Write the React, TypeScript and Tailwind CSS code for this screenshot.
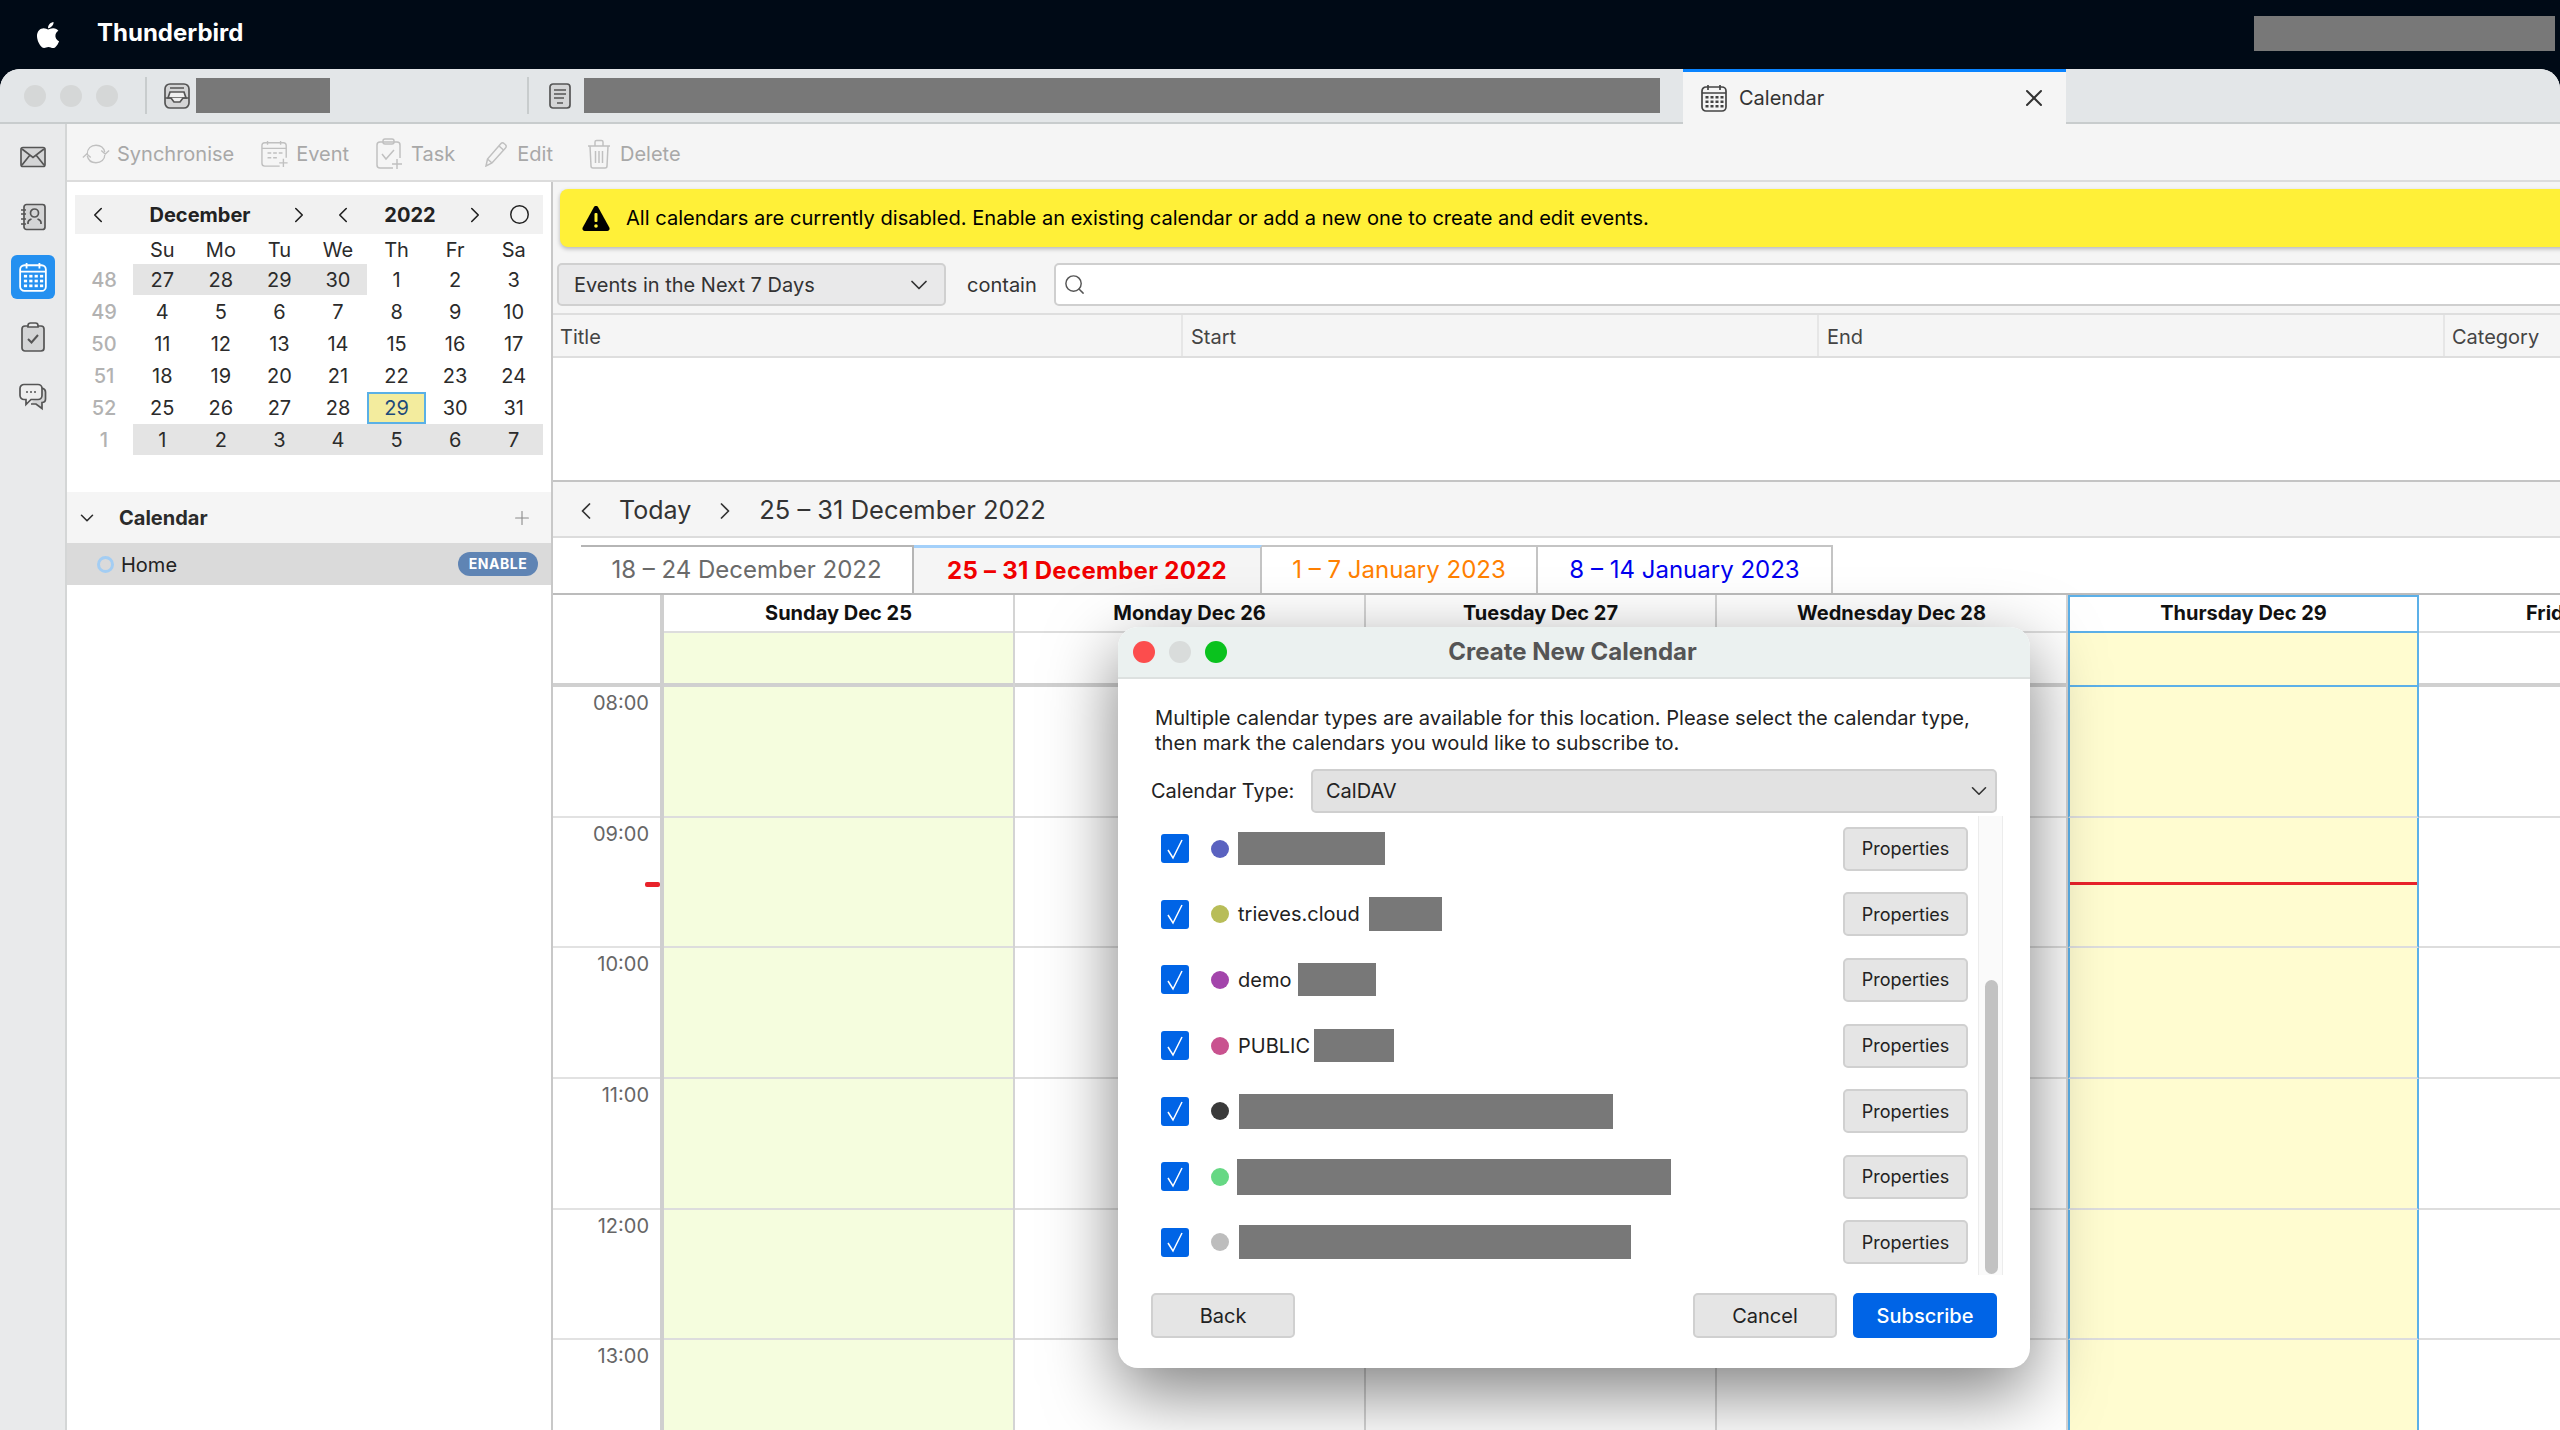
import { FaApple } from 'react-icons/fa';
import { ChevronDown, ChevronLeft, ChevronRight, Circle, Plus, Search, X } from 'lucide-react';

const weeks = [
  { no: 48, days: [27, 28, 29, 30, 1, 2, 3] },
  { no: 49, days: [4, 5, 6, 7, 8, 9, 10] },
  { no: 50, days: [11, 12, 13, 14, 15, 16, 17] },
  { no: 51, days: [18, 19, 20, 21, 22, 23, 24] },
  { no: 52, days: [25, 26, 27, 28, 29, 30, 31] },
  { no: 1, days: [1, 2, 3, 4, 5, 6, 7] },
];

const hours = ['08:00', '09:00', '10:00', '11:00', '12:00', '13:00'];

const calendars = [
  { dot: 'bg-[#5a62c0]', label: '', redact: 'ml-[1px] w-[147px] h-[33px]' },
  { dot: 'bg-[#b8bd58]', label: 'trieves.cloud', redact: 'ml-[9px] w-[73px] h-[34px]' },
  { dot: 'bg-[#a345ab]', label: 'demo', redact: 'ml-[7px] w-[78px] h-[33px]' },
  { dot: 'bg-[#c9528f]', label: 'PUBLIC', redact: 'ml-[4px] w-[80px] h-[33px]' },
  { dot: 'bg-[#3a3a3a]', label: '', redact: 'ml-[2px] w-[374px] h-[35px]' },
  { dot: 'bg-[#66d884]', label: '', redact: 'w-[434px] h-[36px]' },
  { dot: 'bg-[#bdbdbd]', label: '', redact: 'ml-[2px] w-[392px] h-[34px]' },
];

function MailIcon() {
  return (
    <svg width="26" height="22" viewBox="0 0 26 22" fill="none" stroke="#555" strokeWidth="1.7">
      <rect x="1" y="1.500" width="24" height="19" rx="2" fill="#d4d5d6" />
      <path d="M2 3l11 8.500L24 3M2 19l8-10M24 19l-8-10" />
    </svg>
  );
}

function ContactsIcon() {
  return (
    <svg width="26" height="28" viewBox="0 0 26 28" fill="none" stroke="#555" strokeWidth="1.7">
      <rect x="4" y="1.500" width="21" height="25" rx="2.500" fill="#d4d5d6" />
      <path d="M1 7h5M1 11h5M1 16h5M1 21h5" />
      <circle cx="14.500" cy="10" r="4" />
      <path d="M8 21v-1.500c0-2 2-3 3.500-3.500M21 21v-1.500c0-2-2-3-3.500-3.500" />
    </svg>
  );
}

function TasksIcon() {
  return (
    <svg width="24" height="30" viewBox="0 0 24 30" fill="none" stroke="#555" strokeWidth="1.7">
      <rect x="1" y="4" width="22" height="25" rx="3" fill="#d4d5d6" />
      <path d="M7 5V3.500C7 2 8 1 9.500 1h5C16 1 17 2 17 3.500V5z" fill="#e9eaeb" />
      <path d="M7 17l3.500 3.500L17 13" strokeWidth="2" />
    </svg>
  );
}

function ChatIcon() {
  return (
    <svg width="28" height="28" viewBox="0 0 28 28" fill="none" stroke="#555" strokeWidth="1.7">
      <path d="M23 5c2 .5 3.500 2 3.500 4v7c0 2-1.500 3.500-3.500 3.500v6L17 21h-5" fill="#d4d5d6" />
      <path d="M5 1.500h14A4 4 0 0 1 23 5.500v7a4 4 0 0 1-4 4H12l-5 5v-5H5a4 4 0 0 1-4-4v-7a4 4 0 0 1 4-4z" fill="#eeeeee" />
      <path d="M7 9h2M11 9h2M15 9h2" strokeWidth="1.600" />
    </svg>
  );
}

function InboxIcon() {
  return (
    <svg width="26" height="26" viewBox="0 0 26 26" fill="none" stroke="#555" strokeWidth="1.700">
      <rect x="1" y="1" width="24" height="24" rx="5" fill="#d4d5d6" />
      <path d="M6 5h14M6 9h14l2 6H4z" fill="#f0f0f0" />
      <path d="M1 15h6l3 4h6l3-4h6" fill="#f0f0f0" />
    </svg>
  );
}

function NoteIcon() {
  return (
    <svg width="22" height="26" viewBox="0 0 22 26" fill="none" stroke="#555" strokeWidth="1.700">
      <rect x="1" y="1" width="20" height="24" rx="3" fill="#d4d5d6" />
      <path d="M5 7h12M5 11h12M5 15h10M8 20h6" />
    </svg>
  );
}

function CalendarGlyph({ color, size }: { color: string; size: number }) {
  return (
    <svg width={size} height={size} viewBox="0 0 28 28" fill="none" stroke={color} strokeWidth="1.700">
      <rect x="2" y="3" width="24" height="24" rx="4" />
      <path d="M2 9h24M8 1v5M20 1v5" />
      <g fill={color} stroke="none">
        {[7, 12, 17, 22].map((x) =>
          [12, 16.500, 21].map((y) => <rect key={`${x}-${y}`} x={x - 1.500} y={y} width="3" height="2.500" />),
        )}
      </g>
    </svg>
  );
}

function SyncIcon() {
  return (
    <svg width="32" height="26" viewBox="0 0 32 26" fill="none" stroke="currentColor" strokeWidth="1.500">
      <path d="M6 13C6 7 10 3 16 3c5 0 9 3 10 8" />
      <path d="M22 9l4.500 4L31 9" />
      <path d="M26 14c0 5-4 9-10 9-5 0-9-3-10-8" />
      <path d="M1 17l4.500-4 4.500 4" />
    </svg>
  );
}

function EventIcon() {
  return (
    <svg width="30" height="30" viewBox="0 0 30 30" fill="none" stroke="currentColor" strokeWidth="1.500">
      <path d="M20 28H4a3 3 0 0 1-3-3V6a3 3 0 0 1 3-3h20a3 3 0 0 1 3 3v13" />
      <path d="M1 9h26M7 1v4M21 1v4M7 14h4M13 14h4M19 14h4M7 19h4M13 19h4" />
      <path d="M24 20v9M19.500 24.500h9" />
    </svg>
  );
}

function TaskIcon() {
  return (
    <svg width="28" height="32" viewBox="0 0 28 32" fill="none" stroke="currentColor" strokeWidth="1.500">
      <path d="M17 30H4a3 3 0 0 1-3-3V7a3 3 0 0 1 3-3h17a3 3 0 0 1 3 3v13" />
      <rect x="7" y="1" width="11" height="5" rx="2" />
      <path d="M6 16l4 5 8-9" />
      <path d="M21 21v10M16 26h10" />
    </svg>
  );
}

function EditIcon() {
  return (
    <svg width="24" height="26" viewBox="0 0 24 26" fill="none" stroke="currentColor" strokeWidth="1.500">
      <path d="M2 25l1.500-7L17 2.500a2 2 0 0 1 3 0l1.500 1.300a2 2 0 0 1 .2 2.900L8 22z" />
      <path d="M3.500 18L8 22M15 5l4.500 4" />
    </svg>
  );
}

function TrashIcon() {
  return (
    <svg width="24" height="30" viewBox="0 0 24 30" fill="none" stroke="currentColor" strokeWidth="1.500">
      <path d="M1 7h22M8 7V3a1.500 1.500 0 0 1 1.500-1.500h5A1.500 1.500 0 0 1 16 3v4" />
      <path d="M3 7l1 20a2 2 0 0 0 2 2h12a2 2 0 0 0 2-2l1-20" />
      <path d="M8.500 12v12M12 12v12M15.500 12v12" />
    </svg>
  );
}

function WarningIcon() {
  return (
    <svg width="28" height="26" viewBox="0 0 28 26">
      <path d="M14 1c1 0 1.800.5 2.300 1.400l11 20.200c.8 1.500-.2 3.400-2 3.400H2.700c-1.800 0-2.800-1.900-2-3.400l11-20.200C12.200 1.500 13 1 14 1z" fill="#000" />
      <rect x="12.500" y="8" width="3" height="9" rx="1" fill="#fff038" />
      <circle cx="14" cy="21" r="1.800" fill="#fff038" />
    </svg>
  );
}

function Redact({ className }: { className: string }) {
  return <div className={`bg-[#787878] shrink-0 ${className}`} />;
}

function ToolItem({ icon, label, className }: { icon: React.ReactNode; label: string; className?: string }) {
  return (
    <div className={`flex items-center gap-[7px] text-[#a8a8a8] text-[20px] ${className ?? ''}`}>
      <span className="w-[28px] flex justify-center text-[#c0c0c0]">{icon}</span>
      <span>{label}</span>
    </div>
  );
}

function MiniCalendar() {
  return (
    <div className="mt-[13px] ml-[8px] w-[468px]">
      <div className="h-[39px] bg-[#f1f1f1] grid grid-cols-[46px_158px_40px_48px_86px_44px_44px] items-center text-[#222]">
        <ChevronLeft size={26} strokeWidth={1.500} className="justify-self-center" />
        <span className="text-center font-bold text-[20px]">December</span>
        <ChevronRight size={26} strokeWidth={1.500} className="justify-self-center" />
        <ChevronLeft size={26} strokeWidth={1.500} className="justify-self-center" />
        <span className="text-center font-bold text-[20px]">2022</span>
        <ChevronRight size={26} strokeWidth={1.500} className="justify-self-center" />
        <Circle size={21} strokeWidth={1.700} className="justify-self-center" />
      </div>
      <div className="grid grid-cols-[58px_repeat(7,1fr)] text-[20px] text-[#2b2b2b] text-center">
        <span className="h-[30px]" />
        {['Su', 'Mo', 'Tu', 'We', 'Th', 'Fr', 'Sa'].map((d) => (
          <span key={d} className="h-[30px] leading-[32px]">
            {d}
          </span>
        ))}
        {weeks.map((w, wi) => (
          <div key={w.no} className="contents">
            <span className="h-[32px] leading-[32px] text-[#b2b2b2] font-medium">{w.no}</span>
            {w.days.map((d, di) => {
              const other = (wi === 0 && di < 4) || wi === 5;
              const today = wi === 4 && di === 4;
              return (
                <span
                  key={di}
                  className={
                    today
                      ? 'h-[32px] leading-[28px] bg-[#f3ec9e] border-2 border-[#5ab0e6] text-[#1d4a7a]'
                      : other
                        ? 'h-[31px] mb-[1px] leading-[32px] bg-[#e4e4e4]'
                        : 'h-[32px] leading-[32px]'
                  }
                >
                  {d}
                </span>
              );
            })}
          </div>
        ))}
      </div>
    </div>
  );
}

function Sidebar() {
  return (
    <div className="w-[486px] shrink-0 bg-white border-r-2 border-[#c8c8c8]">
      <MiniCalendar />
      <div className="mt-[36px] h-[51px] bg-[#f5f5f5] flex items-center text-[#2b2b2b]">
        <ChevronDown size={22} strokeWidth={1.700} className="ml-[9px]" />
        <span className="ml-[21px] font-bold text-[20px]">Calendar</span>
        <Plus size={22} strokeWidth={1.200} className="ml-auto mr-[18px] text-[#8a8a8a]" />
      </div>
      <div className="h-[42px] bg-[#dadada] flex items-center">
        <span className="ml-[30px] w-[17px] h-[17px] rounded-full border-[3px] border-[#a3cdf3]" />
        <span className="ml-[7px] pt-[2px] text-[20px] text-[#222]">Home</span>
        <span className="ml-auto mr-[13px] w-[80px] h-[24px] rounded-full bg-[#5f84b4] text-white text-[14px] font-bold tracking-[0.5px] text-center leading-[24px]">
          ENABLE
        </span>
      </div>
    </div>
  );
}

function EventFilter() {
  return (
    <>
      <div className="ml-[7px] -mr-[12px] mt-[7px] h-[58px] shrink-0 bg-[#fff038] rounded-[8px] shadow-[0_2px_4px_rgba(0,0,0,0.25)] flex items-center">
        <span className="ml-[22px]">
          <WarningIcon />
        </span>
        <span className="ml-[16px] text-[20.100px] text-black">
          All calendars are currently disabled. Enable an existing calendar or add a new one to create and edit events.
        </span>
      </div>
      <div className="mt-[16px] h-[43px] shrink-0 flex items-center">
        <div className="ml-[4px] w-[389px] h-[43px] bg-[#e9e9ea] border-2 border-[#d0d0d0] rounded-[5px] flex items-center justify-between pl-[15px] pr-[11px] text-[20px] text-[#333]">
          <span>Events in the Next 7 Days</span>
          <ChevronDown size={28} strokeWidth={1.500} />
        </div>
        <span className="ml-[21px] text-[20px] text-[#333]">contain</span>
        <div className="ml-[17px] flex-1 -mr-[8px] h-[43px] bg-white border-2 border-[#cfcfcf] rounded-[5px] flex items-center pl-[7px]">
          <Search size={23} strokeWidth={1.500} className="text-[#555]" />
        </div>
      </div>
      <div className="mt-[7px] h-[45px] shrink-0 flex border-y-2 border-[#dedede] text-[20px] text-[#444] leading-[44px]">
        <span className="w-[630px] pl-[7px] border-r-2 border-[#e6e6e6]">Title</span>
        <span className="w-[636px] pl-[8px] border-r-2 border-[#e6e6e6]">Start</span>
        <span className="w-[626px] pl-[8px] border-r-2 border-[#e6e6e6]">End</span>
        <span className="pl-[7px]">Category</span>
      </div>
      <div className="h-[124px] shrink-0 bg-white border-b-2 border-[#c4c4c4]" />
    </>
  );
}

function WeekNav() {
  return (
    <>
      <div className="h-[56px] shrink-0 bg-[#f5f5f5] border-b-2 border-[#dcdcdc] pt-[3px] flex items-center text-[#333]">
        <ChevronLeft size={28} strokeWidth={1.500} className="ml-[19px]" />
        <span className="ml-[19px] text-[25px]">Today</span>
        <ChevronRight size={28} strokeWidth={1.500} className="ml-[20px]" />
        <span className="ml-[20px] text-[25.500px]">25 – 31 December 2022</span>
      </div>
      <div className="h-[57px] shrink-0 bg-white border-b-2 border-[#bcbcbc] pt-[7px] pl-[28px] flex text-[24px]">
        <div className="w-[333px] flex items-center justify-center border-t-2 border-r-2 border-[#b5b5b5] text-[#6a6a6a]">
          18 – 24 December 2022
        </div>
        <div className="w-[348px] flex items-center justify-center bg-[#f5f5f5] border-t-[3px] border-r-2 border-t-[#a3d0fa] border-r-[#c4c4c4] font-bold tracking-[0.3px] text-[#f00000]">
          25 – 31 December 2022
        </div>
        <div className="w-[276px] flex items-center justify-center border-t-2 border-r-2 border-[#c4c4c4] text-[#ff8000]">
          1 – 7 January 2023
        </div>
        <div className="w-[295px] flex items-center justify-center border-t-2 border-r-2 border-[#c4c4c4] text-[#0000ee]">
          8 – 14 January 2023
        </div>
      </div>
    </>
  );
}

function DayColumn({ title, bg, today }: { title: string; bg: string; today?: boolean }) {
  return (
    <div className={`w-[351px] shrink-0 flex flex-col ${today ? '' : 'border-r-2 border-[#d4d4d4]'}`}>
      <div
        className={`h-[38px] shrink-0 text-center font-bold text-[20px] text-[#111] leading-[33px] ${
          today ? 'border-2 border-[#5cb0e8]' : 'border-t-2 border-t-white border-b-2 border-b-[#dddddd]'
        }`}
      >
        {title}
      </div>
      <div className={`h-[54px] shrink-0 ${bg} ${today ? 'border-x-2 border-b-2 border-[#5cb0e8]' : 'border-b-4 border-[#d0d0d0]'}`} />
      {hours.map((h, i) => (
        <div
          key={h}
          className={`relative h-[130.700px] shrink-0 border-b-2 border-[#dddddd] ${bg} ${today ? 'border-x-2 border-x-[#5cb0e8]' : ''}`}
        >
          {today && i === 1 && <div className="absolute inset-x-0 top-[64px] h-[3px] bg-[#e8222a]" />}
        </div>
      ))}
    </div>
  );
}

function WeekGrid() {
  return (
    <div className="flex flex-1 bg-white overflow-hidden">
      <div className="w-[111px] shrink-0 flex flex-col border-r-4 border-[#cfcfcf]">
        <div className="h-[92px] shrink-0 border-b-4 border-[#d0d0d0]" />
        {hours.map((h, i) => (
          <div
            key={h}
            className="relative h-[130.700px] shrink-0 border-b-2 border-[#e2e2e2] text-right pr-[11px] pt-[1px] text-[20px] text-[#666]"
          >
            {h}
            {i === 1 && <div className="absolute right-0 top-[64px] w-[15px] h-[5px] rounded-[2px] bg-[#e8222a]" />}
          </div>
        ))}
      </div>
      <DayColumn title="Sunday Dec 25" bg="bg-[#f5fdde]" />
      <DayColumn title="Monday Dec 26" bg="bg-white" />
      <DayColumn title="Tuesday Dec 27" bg="bg-white" />
      <DayColumn title="Wednesday Dec 28" bg="bg-white" />
      <DayColumn title="Thursday Dec 29" bg="bg-[#fffcd0]" today />
      <DayColumn title="Friday Dec 30" bg="bg-white" />
    </div>
  );
}

function CreateCalendarDialog() {
  return (
    <div className="absolute left-[1118px] top-[627px] w-[912px] h-[741px] bg-white rounded-[20px] shadow-[0_24px_70px_rgba(0,0,0,0.5)] flex flex-col overflow-hidden text-[#222]">
      <div className="h-[52px] shrink-0 bg-[#ebf1f0] border-b-2 border-[#dde1e0] flex items-center relative">
        <span className="ml-[15px] w-[22px] h-[22px] rounded-full bg-[#fc4d4d]" />
        <span className="ml-[14px] w-[22px] h-[22px] rounded-full bg-[#d9dcdb]" />
        <span className="ml-[14px] w-[22px] h-[22px] rounded-full bg-[#0ac21e]" />
        <span className="flex-1 text-center font-bold text-[24px] text-[#555] -ml-[112px] -mt-[1px]">Create New Calendar</span>
      </div>
      <p className="mt-[27px] ml-[37px] text-[20.100px] leading-[25px]">
        Multiple calendar types are available for this location. Please select the calendar type,
        <br />
        then mark the calendars you would like to subscribe to.
      </p>
      <div className="mt-[13px] ml-[33px] mr-[33px] flex items-center h-[44px] shrink-0">
        <span className="w-[160px] text-[20px]">Calendar Type:</span>
        <div className="flex-1 h-[44px] bg-[#e2e2e2] border-2 border-[#cfcfcf] rounded-[5px] flex items-center justify-between pl-[13px] pr-[3px] text-[20px]">
          <span>CalDAV</span>
          <ChevronDown size={26} strokeWidth={1.500} className="text-[#333]" />
        </div>
      </div>
      <div className="mt-[3px] flex h-[459px] shrink-0">
        <div className="w-[860px] shrink-0 flex flex-col">
          {calendars.map((c, i) => (
            <div key={i} className="h-[65.600px] shrink-0 flex items-center pl-[43px] pr-[10px]">
              <span className="w-[28px] h-[29px] rounded-[3px] bg-[#0064e6] flex items-center justify-center">
                <svg width="22" height="24" viewBox="0 0 22 24" fill="none" stroke="#fff" strokeWidth="1.500">
                  <path d="M4 13l5 8L18 3" />
                </svg>
              </span>
              <span className={`ml-[22px] w-[18px] h-[18px] rounded-full ${c.dot}`} />
              {c.label ? <span className="ml-[9px] text-[20px]">{c.label}</span> : <span className="ml-[8px]" />}
              <Redact className={c.redact} />
              <span className="ml-auto w-[125px] h-[44px] bg-[#e5e5e5] border-2 border-[#d0d0d0] rounded-[5px] flex items-center justify-center text-[18px]">
                Properties
              </span>
            </div>
          ))}
        </div>
        <div className="w-[25px] shrink-0 bg-[#fafafa] border-x border-[#ececec] pt-[164px] pl-[6px]">
          <div className="w-[13px] h-[294px] rounded-full bg-[#c2c2c2]" />
        </div>
      </div>
      <div className="mt-[18px] px-[33px] flex gap-[16px] text-[20px]">
        <span className="w-[144px] h-[45px] bg-[#e5e5e5] border-2 border-[#d0d0d0] rounded-[5px] flex items-center justify-center mr-auto">
          Back
        </span>
        <span className="w-[144px] h-[45px] bg-[#e5e5e5] border-2 border-[#d0d0d0] rounded-[5px] flex items-center justify-center">
          Cancel
        </span>
        <span className="w-[144px] h-[45px] bg-[#0064e6] rounded-[5px] flex items-center justify-center text-white font-medium">
          Subscribe
        </span>
      </div>
    </div>
  );
}

export default function App() {
  return (
    <div className="relative w-[2560px] h-[1430px] overflow-hidden bg-[#000a16] font-[family-name:Inter,sans-serif]">
      {/* menu bar */}
      <div className="h-[69px] flex items-center text-white">
        <FaApple size={30} className="ml-[33px]" />
        <span className="ml-[34px] -mt-[3px] text-[24px] font-bold">Thunderbird</span>
        <Redact className="ml-auto mr-[5px] w-[301px] h-[35px] -mt-[3px]" />
      </div>

      <div className="h-[1361px] rounded-t-[20px] overflow-hidden bg-[#f5f5f5] flex flex-col">
        {/* tabs */}
        <div className="h-[55px] shrink-0 bg-[#e3e6e8] border-b-2 border-[#c8cccd] flex items-center">
          <span className="ml-[24px] w-[22px] h-[22px] rounded-full bg-[#d5d7d7]" />
          <span className="ml-[14px] w-[22px] h-[22px] rounded-full bg-[#d5d7d7]" />
          <span className="ml-[14px] w-[22px] h-[22px] rounded-full bg-[#d5d7d7]" />
          <span className="ml-[27px] w-[2px] h-[37px] bg-[#c8cccd]" />
          <span className="ml-[17px]">
            <InboxIcon />
          </span>
          <Redact className="ml-[6px] w-[134px] h-[35px]" />
          <span className="ml-[197px] w-[2px] h-[37px] bg-[#c8cccd]" />
          <span className="ml-[20px]">
            <NoteIcon />
          </span>
          <Redact className="ml-[13px] w-[1076px] h-[35px]" />
          <div className="ml-[23px] w-[383px] h-[55px] -mb-[2px] bg-[#f5f5f5] border-t-[3px] border-[#0a84ff] flex items-center text-[#333]">
            <span className="ml-[17px]">
              <CalendarGlyph color="#444" size={28} />
            </span>
            <span className="ml-[11px] text-[20px]">Calendar</span>
            <X size={28} strokeWidth={1.700} className="ml-auto mr-[18px]" />
          </div>
        </div>

        <div className="flex flex-1 min-h-0">
          {/* app rail */}
          <div className="w-[67px] shrink-0 bg-[#e9eaeb] border-r-2 border-[#d4d6d6] flex flex-col items-center pt-[18px] gap-[30px]">
            <span className="h-[30px] flex items-center">
              <MailIcon />
            </span>
            <span className="h-[30px] flex items-center">
              <ContactsIcon />
            </span>
            <span className="w-[44px] h-[44px] -my-[7px] rounded-[6px] bg-[#2490f0] flex items-center justify-center">
              <CalendarGlyph color="#fff" size={30} />
            </span>
            <span className="h-[30px] flex items-center">
              <TasksIcon />
            </span>
            <span className="h-[30px] flex items-center">
              <ChatIcon />
            </span>
          </div>

          <div className="flex-1 min-w-0 flex flex-col">
            {/* toolbar */}
            <div className="h-[58px] shrink-0 border-b-2 border-[#dcdcdc] pl-[15px] pt-[4px] flex items-center gap-[27px]">
              <ToolItem icon={<SyncIcon />} label="Synchronise" />
              <ToolItem icon={<EventIcon />} label="Event" />
              <ToolItem icon={<TaskIcon />} label="Task" />
              <ToolItem icon={<EditIcon />} label="Edit" />
              <ToolItem icon={<TrashIcon />} label="Delete" className="ml-[5px]" />
            </div>

            <div className="flex flex-1 min-h-0">
              <Sidebar />
              <div className="flex-1 min-w-0 flex flex-col">
                <EventFilter />
                <WeekNav />
                <WeekGrid />
              </div>
            </div>
          </div>
        </div>
      </div>

      <CreateCalendarDialog />
    </div>
  );
}
